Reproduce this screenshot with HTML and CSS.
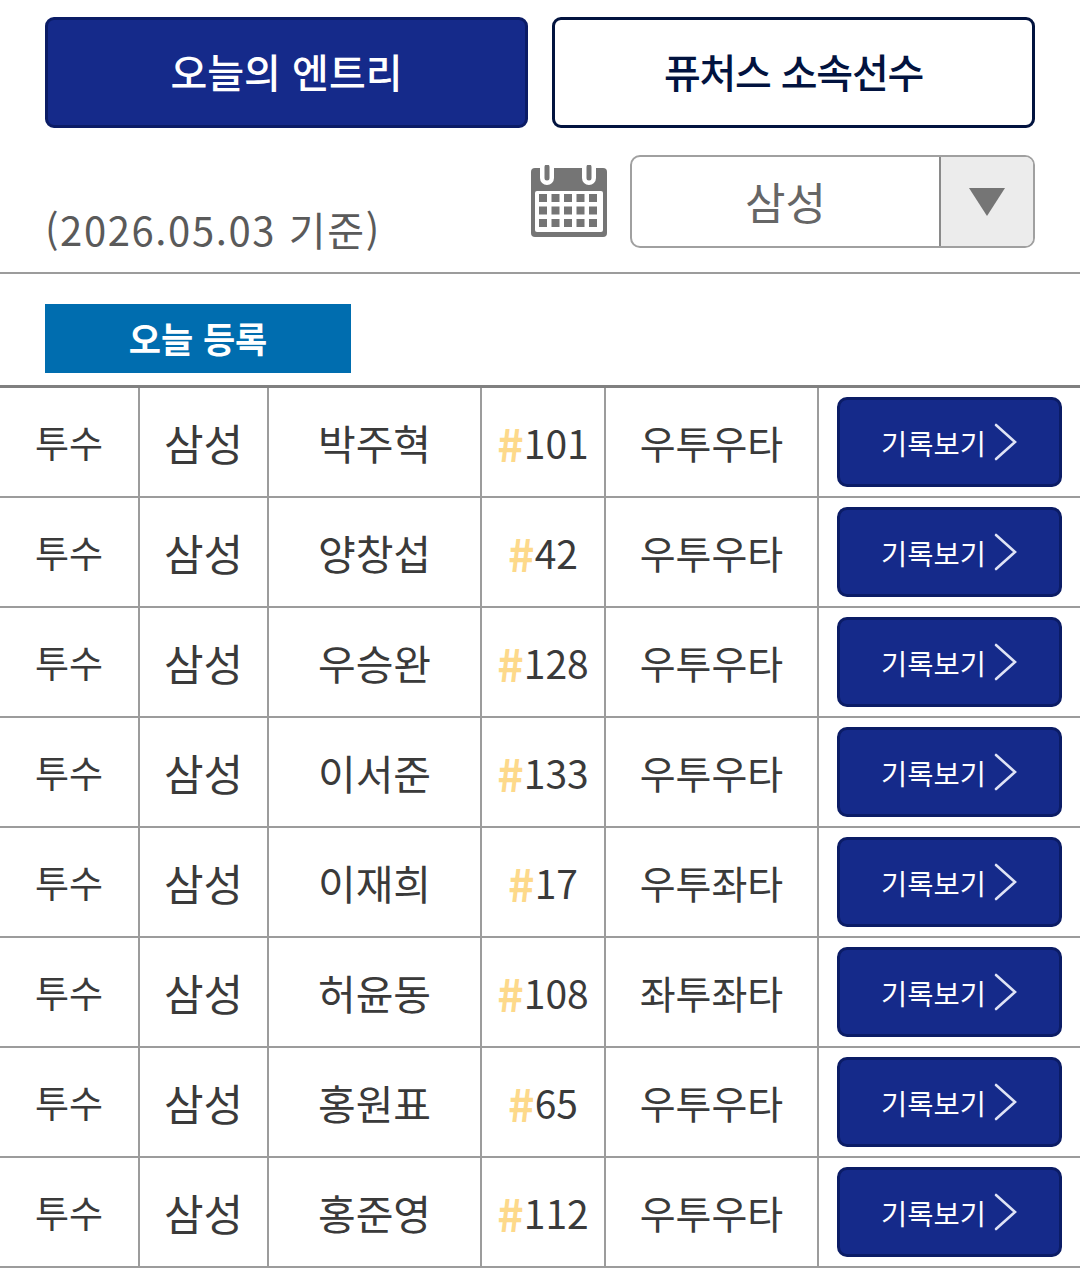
FILE: index.html
```html
<!DOCTYPE html>
<html lang="ko">
<head>
  <meta charset="UTF-8" />
  <title>오늘의 엔트리</title>
  <meta name="viewport" content="width=device-width, initial-scale=1" />
  <link rel="stylesheet" href="styles.css">
</head>
<body>
  <div class="tabs">
    <button class="tab selected">오늘의 엔트리</button>
    <button class="tab">퓨처스 소속선수</button>
  </div>

  <div class="filter-row">
    <div class="base-date">(2026.05.03 기준)</div>
    <div class="filter-right">
      <svg class="calendar" viewBox="0 0 76 72" width="76" height="72">
        <rect x="0" y="3" width="76" height="69" rx="4" fill="#757575"/>
        <path d="M9 3h14v10a7 7 0 0 1-14 0zM51 3h14v10a7 7 0 0 1-14 0z" fill="#fff"/>
        <path d="M16 2v11M58 2v11" stroke="#757575" stroke-width="5" stroke-linecap="round"/>
        <rect x="4" y="26" width="68" height="41" rx="2" fill="#fff"/>
        <g fill="#757575">
          <rect x="8" y="29" width="8" height="8"/><rect x="20.500" y="29" width="8" height="8"/><rect x="33" y="29" width="8" height="8"/><rect x="45.500" y="29" width="8" height="8"/><rect x="58" y="29" width="8" height="8"/>
          <rect x="8" y="41.500" width="8" height="8"/><rect x="20.500" y="41.500" width="8" height="8"/><rect x="33" y="41.500" width="8" height="8"/><rect x="45.500" y="41.500" width="8" height="8"/><rect x="58" y="41.500" width="8" height="8"/>
          <rect x="8" y="54" width="8" height="8"/><rect x="20.500" y="54" width="8" height="8"/><rect x="33" y="54" width="8" height="8"/><rect x="45.500" y="54" width="8" height="8"/><rect x="58" y="54" width="8" height="8"/>
        </g>
      </svg>
      <div class="team-select">
        <div class="team-name">삼성</div>
        <div class="team-arrow"><span class="triangle"></span></div>
      </div>
    </div>
  </div>

  <div class="tag-row">
    <div class="tag">오늘 등록</div>
  </div>

  <div class="entry-table">
    <div class="entry-row">
      <div class="cell pos">투수</div><div class="cell team">삼성</div><div class="cell name">박주혁</div>
      <div class="cell num"><span class="hash">#</span>101</div><div class="cell hand">우투우타</div>
      <div class="cell"><button class="record-btn">기록보기<svg class="chevron" viewBox="0 0 24 38" width="24" height="38"><path d="M2 2l19 17L2 36" fill="none" stroke="#dfe3f5" stroke-width="2.6" stroke-linecap="round"/></svg></button></div>
    </div>
    <div class="entry-row">
      <div class="cell pos">투수</div><div class="cell team">삼성</div><div class="cell name">양창섭</div>
      <div class="cell num"><span class="hash">#</span>42</div><div class="cell hand">우투우타</div>
      <div class="cell"><button class="record-btn">기록보기<svg class="chevron" viewBox="0 0 24 38" width="24" height="38"><path d="M2 2l19 17L2 36" fill="none" stroke="#dfe3f5" stroke-width="2.6" stroke-linecap="round"/></svg></button></div>
    </div>
    <div class="entry-row">
      <div class="cell pos">투수</div><div class="cell team">삼성</div><div class="cell name">우승완</div>
      <div class="cell num"><span class="hash">#</span>128</div><div class="cell hand">우투우타</div>
      <div class="cell"><button class="record-btn">기록보기<svg class="chevron" viewBox="0 0 24 38" width="24" height="38"><path d="M2 2l19 17L2 36" fill="none" stroke="#dfe3f5" stroke-width="2.6" stroke-linecap="round"/></svg></button></div>
    </div>
    <div class="entry-row">
      <div class="cell pos">투수</div><div class="cell team">삼성</div><div class="cell name">이서준</div>
      <div class="cell num"><span class="hash">#</span>133</div><div class="cell hand">우투우타</div>
      <div class="cell"><button class="record-btn">기록보기<svg class="chevron" viewBox="0 0 24 38" width="24" height="38"><path d="M2 2l19 17L2 36" fill="none" stroke="#dfe3f5" stroke-width="2.6" stroke-linecap="round"/></svg></button></div>
    </div>
    <div class="entry-row">
      <div class="cell pos">투수</div><div class="cell team">삼성</div><div class="cell name">이재희</div>
      <div class="cell num"><span class="hash">#</span>17</div><div class="cell hand">우투좌타</div>
      <div class="cell"><button class="record-btn">기록보기<svg class="chevron" viewBox="0 0 24 38" width="24" height="38"><path d="M2 2l19 17L2 36" fill="none" stroke="#dfe3f5" stroke-width="2.6" stroke-linecap="round"/></svg></button></div>
    </div>
    <div class="entry-row">
      <div class="cell pos">투수</div><div class="cell team">삼성</div><div class="cell name">허윤동</div>
      <div class="cell num"><span class="hash">#</span>108</div><div class="cell hand">좌투좌타</div>
      <div class="cell"><button class="record-btn">기록보기<svg class="chevron" viewBox="0 0 24 38" width="24" height="38"><path d="M2 2l19 17L2 36" fill="none" stroke="#dfe3f5" stroke-width="2.6" stroke-linecap="round"/></svg></button></div>
    </div>
    <div class="entry-row">
      <div class="cell pos">투수</div><div class="cell team">삼성</div><div class="cell name">홍원표</div>
      <div class="cell num"><span class="hash">#</span>65</div><div class="cell hand">우투우타</div>
      <div class="cell"><button class="record-btn">기록보기<svg class="chevron" viewBox="0 0 24 38" width="24" height="38"><path d="M2 2l19 17L2 36" fill="none" stroke="#dfe3f5" stroke-width="2.6" stroke-linecap="round"/></svg></button></div>
    </div>
    <div class="entry-row">
      <div class="cell pos">투수</div><div class="cell team">삼성</div><div class="cell name">홍준영</div>
      <div class="cell num"><span class="hash">#</span>112</div><div class="cell hand">우투우타</div>
      <div class="cell"><button class="record-btn">기록보기<svg class="chevron" viewBox="0 0 24 38" width="24" height="38"><path d="M2 2l19 17L2 36" fill="none" stroke="#dfe3f5" stroke-width="2.6" stroke-linecap="round"/></svg></button></div>
    </div>
  </div>
</body>
</html>
```

FILE: styles.css
```css
body {
  font-family: "Noto Sans CJK KR", "Noto Sans", sans-serif;
  background: #fff;
  margin: 0;
  color: #3a3a3a;
}
button {
  font-family: inherit;
  cursor: pointer;
}
.tabs {
  display: flex;
  gap: 24px;
  padding: 17px 45px 0;
}
.tab {
  flex: 1;
  height: 111px;
  padding: 0 0 4px;
  font-size: 40px;
  font-weight: 500;
  letter-spacing: -1.2px;
  background: #fff;
  color: #02133f;
  border: 3px solid #02133f;
  border-radius: 9px;
}
.tab.selected {
  letter-spacing: 0;
  background: #152a8a;
  color: #fff;
  border-color: #0b1c66;
}
.filter-row {
  display: flex;
  justify-content: space-between;
  padding: 27px 45px 24px;
  border-bottom: 2px solid #9c9c9c;
}
.base-date {
  align-self: flex-end;
  font-size: 40px;
  line-height: 50px;
  letter-spacing: 1.6px;
  margin-bottom: -6px;
  color: #5a5a5a;
}
.filter-right {
  display: flex;
  align-items: flex-start;
  gap: 23px;
}
.calendar {
  flex: none;
  margin-top: 10px;
}
.team-select {
  display: flex;
  width: 405px;
  height: 93px;
  box-sizing: border-box;
  border: 2px solid #a0a0a0;
  border-radius: 10px;
  overflow: hidden;
}
.team-name {
  flex: 1;
  text-align: center;
  font-size: 44px;
  line-height: 88px;
  color: #666;
}
.team-arrow {
  width: 92px;
  display: flex;
  align-items: center;
  justify-content: center;
  background: #ececec;
  border-left: 2px solid #8a8a8a;
}
.triangle {
  width: 0;
  height: 0;
  border-left: 18px solid transparent;
  border-right: 18px solid transparent;
  border-top: 28px solid #757575;
}
.tag-row {
  padding: 30px 45px 12px;
}
.tag {
  width: 306px;
  height: 69px;
  background: #006daf;
  color: #fff;
  font-size: 35px;
  font-weight: 700;
  line-height: 67px;
  text-align: center;
}
.entry-table {
  border-top: 3px solid #808080;
}
.entry-row {
  display: grid;
  grid-template-columns: 140px 129px 213px 124px 213px 261px;
  height: 110px;
  box-sizing: border-box;
  border-bottom: 2px solid #9c9c9c;
}
.cell {
  display: flex;
  align-items: center;
  justify-content: center;
  font-size: 40px;
  border-right: 2px solid #9c9c9c;
  white-space: nowrap;
}
.cell.pos {
  font-size: 37px;
}
.cell.team {
  font-size: 43px;
}
.cell.name {
  font-size: 41px;
}
.cell.num {
  font-size: 39px;
}
.cell.hand {
  font-size: 39px;
}
.cell:last-child {
  border-right: none;
  justify-content: flex-start;
  padding-left: 18px;
}
.hash {
  color: #fdd98a;
  font-size: 45px;
  font-weight: 700;
}
.record-btn {
  display: flex;
  align-items: center;
  justify-content: center;
  gap: 8px;
  width: 225px;
  height: 90px;
  padding: 0;
  background: #152a8a;
  color: #fff;
  font-size: 28.500px;
  border: 3px solid #0b1c66;
  border-radius: 10px;
}
.chevron {
  flex: none;
}
```
